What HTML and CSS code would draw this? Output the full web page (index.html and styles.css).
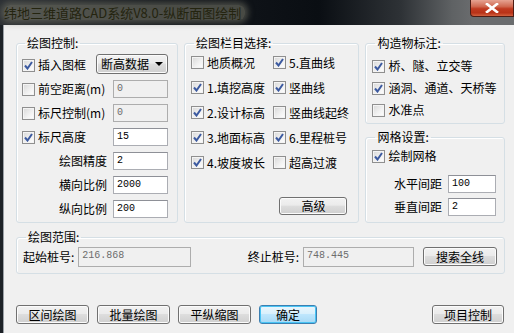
FILE: index.html
```html
<!DOCTYPE html>
<html lang="zh-CN">
  <head>
    <meta charset="UTF-8" />
    <title>纵断面图绘制</title>
    <link rel="stylesheet" href="styles.css">
  </head>
  <body>
    <div class="titlebar">
      <span class="title">纬地三维道路CAD系统V8.0-纵断面图绘制</span>
      <span class="close-btn">
        <svg width="14" height="10" viewBox="0 0 14 10"><path d="M2 1 L12 9 M12 1 L2 9" stroke="#fff" stroke-width="2.6" stroke-linecap="square"/></svg>
      </span>
    </div>

    <div class="client">
      <div class="top-row">
        <!-- 绘图控制 -->
        <fieldset class="group g-control">
          <legend>绘图控制:</legend>
          <div class="row">
            <span class="cb on"><svg viewBox="0 0 9 9"><path d="M1 4.5 L3.5 7.5 L8 1" /></svg></span>
            <span class="lbl">插入图框</span>
            <span class="select">断高数据 <i class="arrow"></i></span>
          </div>
          <div class="row">
            <span class="cb"></span>
            <span class="lbl grow">前空距离(m)</span>
            <span class="input off">0</span>
          </div>
          <div class="row">
            <span class="cb"></span>
            <span class="lbl grow">标尺控制(m)</span>
            <span class="input off">0</span>
          </div>
          <div class="row">
            <span class="cb on"><svg viewBox="0 0 9 9"><path d="M1 4.5 L3.5 7.5 L8 1" /></svg></span>
            <span class="lbl grow">标尺高度</span>
            <span class="input">15</span>
          </div>
          <div class="row">
            <span class="lbl grow right">绘图精度</span>
            <span class="input">2</span>
          </div>
          <div class="row">
            <span class="lbl grow right">横向比例</span>
            <span class="input">2000</span>
          </div>
          <div class="row">
            <span class="lbl grow right">纵向比例</span>
            <span class="input">200</span>
          </div>
        </fieldset>

        <!-- 绘图栏目选择 -->
        <fieldset class="group g-items">
          <legend>绘图栏目选择:</legend>
          <div class="grid">
            <div class="row"><span class="cb"></span><span class="lbl">地质概况</span></div>
            <div class="row"><span class="cb on"><svg viewBox="0 0 9 9"><path d="M1 4.5 L3.5 7.5 L8 1" /></svg></span><span class="lbl">5.直曲线</span></div>
            <div class="row"><span class="cb on"><svg viewBox="0 0 9 9"><path d="M1 4.5 L3.5 7.5 L8 1" /></svg></span><span class="lbl">1.填挖高度</span></div>
            <div class="row"><span class="cb on"><svg viewBox="0 0 9 9"><path d="M1 4.5 L3.5 7.5 L8 1" /></svg></span><span class="lbl">竖曲线</span></div>
            <div class="row"><span class="cb on"><svg viewBox="0 0 9 9"><path d="M1 4.5 L3.5 7.5 L8 1" /></svg></span><span class="lbl">2.设计标高</span></div>
            <div class="row"><span class="cb"></span><span class="lbl">竖曲线起终</span></div>
            <div class="row"><span class="cb on"><svg viewBox="0 0 9 9"><path d="M1 4.5 L3.5 7.5 L8 1" /></svg></span><span class="lbl">3.地面标高</span></div>
            <div class="row"><span class="cb on"><svg viewBox="0 0 9 9"><path d="M1 4.5 L3.5 7.5 L8 1" /></svg></span><span class="lbl">6.里程桩号</span></div>
            <div class="row"><span class="cb on"><svg viewBox="0 0 9 9"><path d="M1 4.5 L3.5 7.5 L8 1" /></svg></span><span class="lbl">4.坡度坡长</span></div>
            <div class="row"><span class="cb"></span><span class="lbl">超高过渡</span></div>
          </div>
          <div class="adv-wrap"><span class="btn btn-adv">高级</span></div>
        </fieldset>

        <div class="right-col">
          <!-- 构造物标注 -->
          <fieldset class="group g-struct">
            <legend>构造物标注:</legend>
            <div class="row"><span class="cb on"><svg viewBox="0 0 9 9"><path d="M1 4.5 L3.5 7.5 L8 1" /></svg></span><span class="lbl">桥、隧、立交等</span></div>
            <div class="row"><span class="cb on"><svg viewBox="0 0 9 9"><path d="M1 4.5 L3.5 7.5 L8 1" /></svg></span><span class="lbl">涵洞、通道、天桥等</span></div>
            <div class="row"><span class="cb"></span><span class="lbl">水准点</span></div>
          </fieldset>

          <!-- 网格设置 -->
          <fieldset class="group g-grid">
            <legend>网格设置:</legend>
            <div class="row first"><span class="cb on"><svg viewBox="0 0 9 9"><path d="M1 4.5 L3.5 7.5 L8 1" /></svg></span><span class="lbl">绘制网格</span></div>
            <div class="row sp">
              <span class="lbl grow right">水平间距</span>
              <span class="input small">100</span>
            </div>
            <div class="row">
              <span class="lbl grow right">垂直间距</span>
              <span class="input small">2</span>
            </div>
          </fieldset>
        </div>
      </div>

      <!-- 绘图范围 -->
      <fieldset class="group g-range">
        <legend>绘图范围:</legend>
        <div class="row">
          <span class="lbl">起始桩号:</span>
          <span class="input off wide">216.868</span>
          <span class="lbl end-lbl">终止桩号:</span>
          <span class="input off wide2">748.445</span>
          <span class="btn btn-search">搜索全线</span>
        </div>
      </fieldset>

      <div class="actions">
        <span class="btn">区间绘图</span>
        <span class="btn">批量绘图</span>
        <span class="btn">平纵缩图</span>
        <span class="btn btn-ok">确定</span>
        <span class="btn btn-proj">项目控制</span>
      </div>
    </div>
  </body>
</html>
```

FILE: styles.css
```css
body {
  margin: 0;
  width: 514px;
  height: 333px;
  overflow: hidden;
  background-color: #f0f0f0;
  font-family: "Noto Sans CJK SC", "Liberation Sans", sans-serif;
  font-size: 12px;
  line-height: 14px;
  color: #000;
}

.titlebar {
  height: 25px;
  display: flex;
  align-items: flex-start;
  justify-content: space-between;
  background: linear-gradient(to right, #2c3034 0%, #14181d 30%, #0a0e13 62%, #2e3236 78%, #5f6264 88%, #6a6c6e 92%);
}

.title {
  margin: 5px 0 0 4px;
  padding: 0 4px 0 0;
  font-size: 13px;
  line-height: 15px;
  color: #24240f;
  border-radius: 6px;
  background: rgba(120, 120, 105, 0.55);
  box-shadow: 0 0 6px 3px rgba(120, 120, 105, 0.55);
}

.close-btn {
  width: 44px;
  height: 17px;
  box-sizing: border-box;
  border: 1px solid #4e1c14;
  border-top: none;
  border-radius: 0 0 0 4px;
  background: linear-gradient(to bottom, #e6a392 0%, #d06a52 40%, #c03a20 55%, #b83218 80%, #d2603e 100%);
  display: flex;
  align-items: center;
  justify-content: center;
}

.client {
  height: 308px;
  box-sizing: border-box;
  border-left: 3px solid #1c2126;
  box-shadow: inset 1px 0 #9aa0a6;
  padding: 11px 9px 0 13px;
  display: flex;
  flex-direction: column;
}

.top-row {
  display: flex;
  gap: 6px;
  height: 187px;
}

.group {
  margin: 0;
  padding: 0;
  border: 1px solid #d5dfe5;
  border-radius: 3px;
  box-shadow: inset 1px 1px #fff;
  box-sizing: border-box;
}

.group legend {
  margin-left: 3px;
  padding: 0 2px;
  line-height: 14px;
}

.row {
  display: flex;
  align-items: center;
  white-space: nowrap;
}

.lbl.grow {
  flex: 1;
}

.lbl.right {
  text-align: right;
  padding-right: 6px;
}

.cb {
  width: 13px;
  height: 13px;
  box-sizing: border-box;
  border: 1px solid #8f8f8f;
  background: linear-gradient(135deg, #d8d8d8 0%, #f2f2f2 60%, #ffffff 100%);
  box-shadow: inset 0 0 0 1px #f4f4f4;
  margin-right: 3px;
  flex: none;
  display: flex;
  align-items: center;
  justify-content: center;
}

.cb svg {
  width: 9px;
  height: 9px;
}

.cb svg path {
  fill: none;
  stroke: #3c5aa0;
  stroke-width: 2;
}

.input {
  height: 18px;
  box-sizing: border-box;
  border: 1px solid #abadb3;
  border-top-color: #8e9097;
  background-color: #fff;
  font-family: "Liberation Mono", "DejaVu Sans Mono", monospace;
  font-size: 10px;
  line-height: 16px;
  padding-left: 3px;
  flex: none;
}

.input.off {
  background-color: #f0f0f0;
  border-color: #adadad;
  color: #6d6d6d;
}

.btn {
  display: inline-flex;
  align-items: center;
  justify-content: center;
  height: 19px;
  box-sizing: border-box;
  border: 1px solid #707070;
  border-radius: 3px;
  background: linear-gradient(to bottom, #f2f2f2 0%, #ebebeb 45%, #dddddd 50%, #cfcfcf 100%);
  box-shadow: inset 0 0 0 1px #fbfbfb;
  font-size: 12px;
}

/* left group */
.g-control {
  width: 161px;
  padding: 3px 9px 0 5px;
}

.g-control .row {
  height: 24px;
}

.g-control .input {
  width: 55px;
}

.select {
  margin-left: 10px;
  width: 72px;
  height: 20px;
  box-sizing: border-box;
  border: 1px solid #707070;
  border-radius: 3px;
  background: linear-gradient(to bottom, #f2f2f2 0%, #ebebeb 45%, #dddddd 50%, #cfcfcf 100%);
  box-shadow: inset 0 0 0 1px #fbfbfb;
  display: flex;
  align-items: center;
  padding-left: 4px;
  gap: 6px;
  margin-top: -3px;
}

.arrow {
  width: 0;
  height: 0;
  border-left: 4px solid transparent;
  border-right: 4px solid transparent;
  border-top: 4px solid #000;
}

/* middle group */
.g-items {
  width: 176px;
  padding: 0 0 0 6px;
}

.grid {
  display: grid;
  grid-template-columns: 82px 1fr;
}

.grid .row {
  height: 25px;
}

.adv-wrap {
  display: flex;
  justify-content: flex-end;
  padding-right: 11px;
  margin-top: 22px;
}

.btn-adv {
  width: 68px;
  height: 18px;
}

/* right column */
.right-col {
  width: 140px;
  display: flex;
  flex-direction: column;
  gap: 6px;
}

.g-struct {
  height: 88px;
  padding: 5px 0 0 6px;
}

.g-struct .row {
  height: 22px;
}

.g-grid {
  flex: 1;
  padding: 0 8px 0 6px;
}

.g-grid .row {
  height: 23px;
}

.g-grid .row.first {
  height: 24px;
}

.g-grid .row.sp {
  margin-top: 4px;
}

.input.small {
  width: 48px;
}

/* range group */
.g-range {
  margin-top: 7px;
  height: 44px;
  padding: 0 7px 0 6px;
}

.g-range .row {
  height: 25px;
}

.input.wide {
  width: 113px;
  height: 20px;
  margin-left: 4px;
}

.end-lbl {
  margin-left: auto;
}

.input.wide2 {
  width: 111px;
  height: 20px;
  margin-left: 4px;
}

.btn-search {
  width: 74px;
  height: 19px;
  margin-left: 9px;
}

/* bottom buttons */
.actions {
  display: flex;
  margin-top: 31px;
  padding-right: 1px;
}

.actions .btn {
  width: 73px;
  margin-right: 8px;
}

.actions .btn-ok {
  width: 58px;
  border-color: #3c7fb1;
  background: linear-gradient(to bottom, #eaf6fd 0%, #d9f0fc 45%, #bee6fd 50%, #a7d9f5 100%);
  box-shadow: inset 0 0 0 1px #48c4f4;
}

.actions .btn-proj {
  width: 72px;
  margin-left: auto;
  margin-right: 0;
}
```
